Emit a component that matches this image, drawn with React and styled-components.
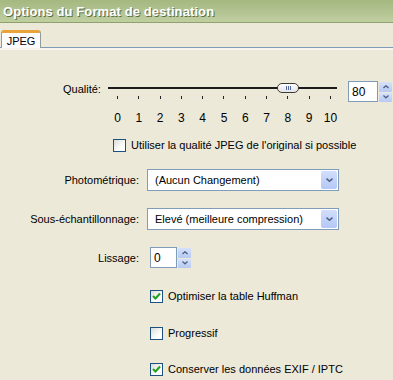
import React from "react";
import styled, { createGlobalStyle } from "styled-components";

const Global = createGlobalStyle`
  html, body {
    margin: 0;
    padding: 0;
    background: #ece9d8;
  }
  body {
    font-family: "Liberation Sans", Arial, sans-serif;
    font-size: 11px;
    color: #000;
  }
`;

const Window = styled.div`
  width: 393px;
  height: 380px;
  overflow: hidden;
  background: #ece9d8;
`;

const TitleBar = styled.div`
  height: 22px;
  display: flex;
  align-items: center;
  padding-left: 3px;
  background: linear-gradient(#a4b880, #b4c593 60%, #c0cfa1);
  border-bottom: 1px solid #8fa26e;
  color: #fff;
  font-weight: bold;
  font-size: 13px;
  letter-spacing: 0.1px;
  text-shadow: 1px 1px 0 #5f6d45;
`;

const TabStrip = styled.div`
  margin-top: 7px;
  display: flex;
  border-bottom: 1px solid #7f9db9;
  box-shadow: 0 2px 0 #f7f5ee;
`;

const Tab = styled.div`
  width: 38px;
  height: 15px;
  margin-left: 1px;
  margin-bottom: -1px;
  display: flex;
  align-items: center;
  justify-content: center;
  background: #fcfcfe;
  border: 1px solid #919b9c;
  border-bottom: none;
  border-top: 3px solid #e8a43a;
  border-radius: 3px 3px 0 0;
`;

const Panel = styled.div`
  display: flex;
  flex-direction: column;
`;

const SliderRow = styled.div`
  display: flex;
  align-items: flex-start;
  margin-top: 33px;
  padding-left: 63px;
`;

const SliderLabel = styled.div`
  width: 45px;
  margin-top: 1px;
  line-height: 14px;
`;

const Slider = styled.div`
  width: 229px;
  position: relative;
`;

const Track = styled.div`
  height: 14px;
  display: flex;
  align-items: center;
  &::before {
    content: "";
    flex: 1;
    height: 2px;
    background: #1a1a1a;
  }
`;

const Thumb = styled.div`
  position: absolute;
  top: 2px;
  width: 20px;
  height: 8px;
  border: 1px solid #3b3b3b;
  border-radius: 5px;
  background: linear-gradient(#ffffff, #e4e4e4);
  display: flex;
  justify-content: center;
  align-items: center;
  gap: 1px;
  transform: translateX(-50%);
  & > i {
    width: 1px;
    height: 4px;
    background: #4f6aa0;
  }
`;

const Scale = styled.div`
  margin: 0 6px 0 9px;
  display: flex;
  justify-content: space-between;
`;

const Ticks = styled(Scale)`
  height: 4px;
  & > span {
    width: 1px;
    height: 3px;
    background: #222;
    margin-top: 1px;
  }
`;

const Numbers = styled(Scale)`
  margin-top: 12px;
  & > span {
    width: 1px;
    display: flex;
    justify-content: center;
    font-size: 12px;
    line-height: 14px;
    white-space: nowrap;
  }
`;

const SpinWrap = styled.div`
  display: flex;
  gap: 1px;
  margin-left: ${({ $gap }) => $gap}px;
`;

const SpinInput = styled.div`
  width: ${({ $w }) => $w}px;
  height: 19px;
  background: #fff;
  border: 1px solid #7f9db9;
  display: flex;
  align-items: center;
  padding-left: 3px;
  font-size: 12px;
`;

const SpinButtons = styled.div`
  width: 13px;
  display: flex;
  flex-direction: column;
  gap: 1px;
  padding-top: 1px;
`;

const SpinBtn = styled.div`
  flex: 1;
  height: 9px;
  border-radius: 1px;
  background: linear-gradient(#d6e2fb, #b6c9f3);
  display: flex;
  align-items: center;
  justify-content: center;
`;

const CheckRow = styled.label`
  display: flex;
  align-items: center;
  gap: 5px;
  padding-left: ${({ $indent }) => $indent}px;
  margin-top: ${({ $top }) => $top}px;
  line-height: 14px;
`;

const Box = styled.span`
  width: 11px;
  height: 11px;
  border: 1px solid #1c5180;
  background: linear-gradient(135deg, #dcdcd5, #ffffff 70%);
  display: flex;
  align-items: center;
  justify-content: center;
`;

const FieldRow = styled.div`
  display: grid;
  grid-template-columns: 139px auto;
  column-gap: ${({ $gap }) => $gap}px;
  align-items: center;
  justify-content: start;
  margin-top: ${({ $top }) => $top}px;
`;

const FieldLabel = styled.div`
  text-align: right;
  white-space: nowrap;
`;

const Select = styled.div`
  width: 182px;
  height: 20px;
  background: #fff;
  border: 1px solid #7f9db9;
  display: flex;
  align-items: center;
  justify-content: space-between;
  padding: 0 1px 0 7px;
  font-size: 11px;
`;

const DropBtn = styled.div`
  width: 16px;
  height: 18px;
  border-radius: 2px;
  background: linear-gradient(#d2defb, #b4c8f6);
  display: flex;
  align-items: center;
  justify-content: center;
`;

const Chevron = ({ up, size = 7 }) => (
  <svg width={size} height={size * 0.6} viewBox="0 0 7 4">
    <path
      d={up ? "M0.5 3.5 L3.5 0.8 L6.5 3.5" : "M0.5 0.5 L3.5 3.2 L6.5 0.5"}
      fill="none"
      stroke="#4d6185"
      strokeWidth="1.5"
    />
  </svg>
);

const Check = () => (
  <svg width="9" height="8" viewBox="0 0 9 8">
    <path d="M1 4 L3.5 6.5 L8 1.5" fill="none" stroke="#21a121" strokeWidth="2" />
  </svg>
);

const Spin = ({ value, width, gap }) => (
  <SpinWrap $gap={gap}>
    <SpinInput $w={width}>{value}</SpinInput>
    <SpinButtons>
      <SpinBtn>
        <Chevron up size={6} />
      </SpinBtn>
      <SpinBtn>
        <Chevron size={6} />
      </SpinBtn>
    </SpinButtons>
  </SpinWrap>
);

const Checkbox = ({ checked, children, indent, top }) => (
  <CheckRow $indent={indent} $top={top}>
    <Box>{checked && <Check />}</Box>
    {children}
  </CheckRow>
);

const ticks = Array.from({ length: 11 }, (_, i) => i);
const quality = 8;

export default function App() {
  return (
    <Window>
      <Global />
      <TitleBar>Options du Format de destination</TitleBar>
      <TabStrip>
        <Tab>JPEG</Tab>
      </TabStrip>
      <Panel>
        <SliderRow>
          <SliderLabel>Qualité:</SliderLabel>
          <Slider>
            <Track />
            <Thumb style={{ left: `${9 + (quality * 214) / 10}px` }}>
              <i />
              <i />
              <i />
            </Thumb>
            <Ticks>
              {ticks.map((t) => (
                <span key={t} />
              ))}
            </Ticks>
            <Numbers>
              {ticks.map((t) => (
                <span key={t}>{t}</span>
              ))}
            </Numbers>
          </Slider>
          <Spin value="80" width={25} gap={11} />
        </SliderRow>
        <Checkbox indent={113} top={13}>
          Utiliser la qualité JPEG de l'original si possible
        </Checkbox>
        <FieldRow $gap={8} $top={17}>
          <FieldLabel>Photométrique:</FieldLabel>
          <Select>
            (Aucun Changement)
            <DropBtn>
              <Chevron />
            </DropBtn>
          </Select>
        </FieldRow>
        <FieldRow $gap={8} $top={17}>
          <FieldLabel>Sous-échantillonnage:</FieldLabel>
          <Select>
            Elevé (meilleure compression)
            <DropBtn>
              <Chevron />
            </DropBtn>
          </Select>
        </FieldRow>
        <FieldRow $gap={11} $top={17}>
          <FieldLabel>Lissage:</FieldLabel>
          <Spin value="0" width={22} gap={0} />
        </FieldRow>
        <Checkbox indent={150} top={21} checked>
          Optimiser la table Huffman
        </Checkbox>
        <Checkbox indent={150} top={23}>
          Progressif
        </Checkbox>
        <Checkbox indent={150} top={22} checked>
          Conserver les données EXIF / IPTC
        </Checkbox>
      </Panel>
    </Window>
  );
}
